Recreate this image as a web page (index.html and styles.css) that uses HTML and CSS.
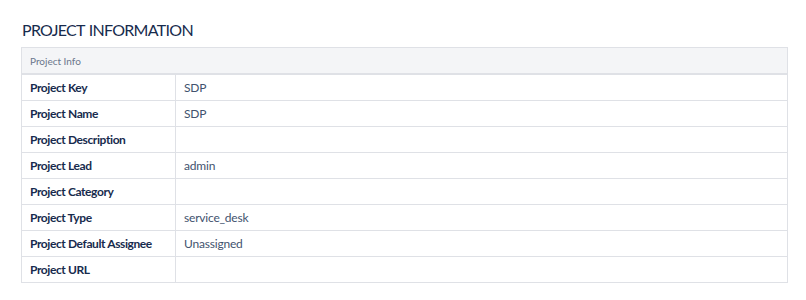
FILE: index.html
```html
<!DOCTYPE html>
<html>
<head>
<meta charset="utf-8">
<link rel="stylesheet" href="styles.css">
</head>
<body>
<div class="page">
  <h1 class="title">PROJECT INFORMATION</h1>
  <table class="info">
    <thead>
      <tr><th colspan="2">Project Info</th></tr>
    </thead>
    <tbody>
      <tr><td class="label">Project Key</td><td class="value">SDP</td></tr>
      <tr><td class="label">Project Name</td><td class="value">SDP</td></tr>
      <tr><td class="label">Project Description</td><td class="value"></td></tr>
      <tr><td class="label">Project Lead</td><td class="value">admin</td></tr>
      <tr><td class="label">Project Category</td><td class="value"></td></tr>
      <tr><td class="label">Project Type</td><td class="value">service_desk</td></tr>
      <tr><td class="label">Project Default Assignee</td><td class="value">Unassigned</td></tr>
      <tr><td class="label">Project URL</td><td class="value"></td></tr>
    </tbody>
  </table>
</div>
</body>
</html>
```
FILE: styles.css
```css
html, body {
  margin: 0;
  padding: 0;
  background: #ffffff;
}
body {
  font-family: "Lato", "Noto Sans", sans-serif;
  color: #172b4d;
}
.page {
  padding: 18px 18px 0 21px;
}
.title {
  margin: 0 0 5px 1px;
  font-size: 16px;
  font-weight: 400;
  color: #172b4d;
  line-height: 24px;
  letter-spacing: -0.7px;
  word-spacing: 1px;
}
.info {
  width: 767px;
  border-collapse: collapse;
  border: 1px solid #dfe1e6;
  font-size: 12px;
}
.info th {
  background: #f4f5f7;
  color: #6b778c;
  font-weight: 400;
  font-size: 10px;
  text-align: left;
  height: 25px;
  padding: 0 8px;
  border-bottom: 2px solid #dfe1e6;
}
.info td {
  height: 25px;
  padding: 0 8px;
  border-bottom: 1px solid #dfe1e6;
  white-space: nowrap;
}
.info .label {
  width: 137px;
  font-weight: 700;
  color: #172b4d;
  letter-spacing: -0.4px;
  border-right: 1px solid #dfe1e6;
}
.info .value {
  color: #42526e;
  letter-spacing: -0.2px;
}
```
